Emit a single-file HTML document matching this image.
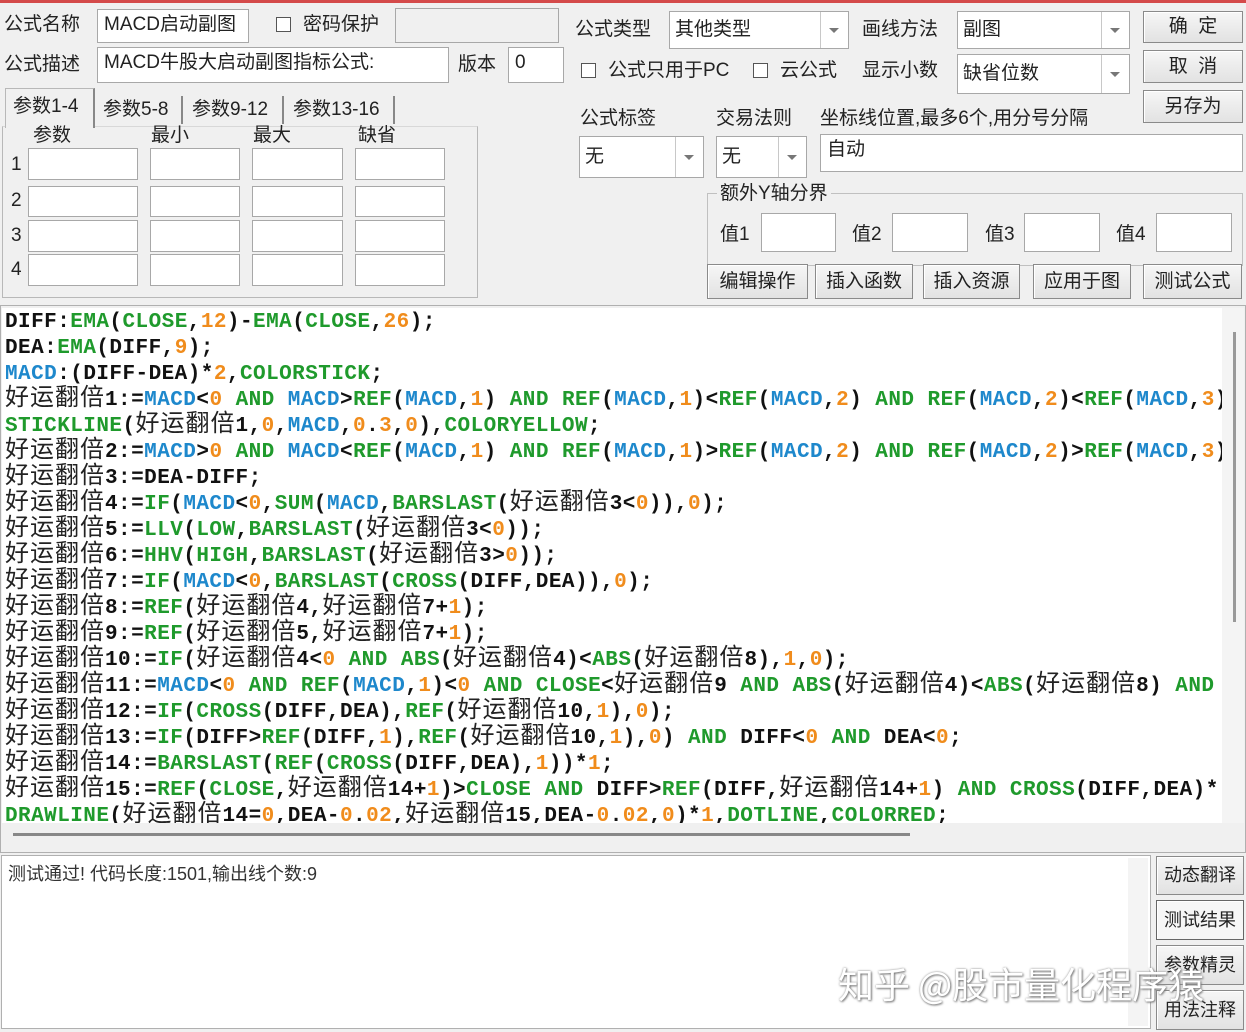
<!DOCTYPE html>
<html><head><meta charset="utf-8">
<style>
*{box-sizing:border-box;margin:0;padding:0}
body{width:1246px;height:1032px;background:#f0f0f0;position:relative;overflow:hidden;font-family:"Liberation Sans","Microsoft YaHei","Noto Sans CJK SC",sans-serif;font-size:19px;color:#222}
.a{position:absolute;white-space:nowrap}
.l{position:absolute;white-space:nowrap;line-height:24px}
.in{position:absolute;background:#fff;border:1px solid #a8a8a8;font-size:19px;line-height:30px;padding-left:6px;white-space:nowrap}
.dis{background:#f0f0f0}
.cb{position:absolute;width:15px;height:15px;background:#fff;border:1px solid #555}
.sel{position:absolute;background:#fff;border:1px solid #a8a8a8;padding-left:5px;font-size:19px;white-space:nowrap}
.sel:after{content:"";position:absolute;right:0;top:0;bottom:0;width:27px;border-left:1px solid #c8c8c8;background:#fff}
.sel i{position:absolute;right:9px;top:50%;margin-top:-2px;width:0;height:0;border-left:5px solid transparent;border-right:5px solid transparent;border-top:5px solid #777;z-index:2}
.btn{position:absolute;background:linear-gradient(#f6f6f6,#e2e2e2);border:1px solid #8a8a8a;box-shadow:inset 1px 1px 0 #fff;text-align:center;font-size:19px;white-space:nowrap}
#code{position:absolute;left:2px;top:308px;width:1220px;height:515px;background:#fff;overflow:hidden;padding-left:3px;padding-top:2px;font-family:"Liberation Mono",monospace;font-weight:bold;font-size:21px;letter-spacing:0.45px;line-height:26px;color:#111;white-space:pre}
#code div{height:26px;line-height:26px;overflow:visible}
#code i{font-style:normal;color:#1f9a2c}
#code u{text-decoration:none;color:#1e88cc}
#code s{text-decoration:none;color:#f08c1c}
#code em{font-style:normal;font-family:"Noto Sans CJK SC",sans-serif;font-weight:normal;font-size:24px;letter-spacing:1px;line-height:0;color:#222}
</style></head><body>
<div class="a" style="left:0;top:0;width:1246px;height:3px;background:#d44a4a"></div>

<div class="l" style="left:4px;top:13px">公式名称</div>
<div class="in" style="left:97px;top:9px;width:152px;height:34px">MACD启动副图</div>
<div class="cb" style="left:276px;top:17px"></div>
<div class="l" style="left:303px;top:13px">密码保护</div>
<div class="in dis" style="left:395px;top:8px;width:164px;height:35px"></div>
<div class="l" style="left:4px;top:53px">公式描述</div>
<div class="in" style="left:97px;top:47px;width:352px;height:36px">MACD牛股大启动副图指标公式:</div>
<div class="l" style="left:458px;top:53px">版本</div>
<div class="in" style="left:508px;top:47px;width:56px;height:36px">0</div>

<div class="a" style="left:2px;top:126px;width:476px;height:172px;border:1px solid #b8b8b8;border-top-color:#d8d8d8"></div>
<div class="a" style="left:5px;top:88px;width:90px;height:40px;background:#f0f0f0;border:1px solid #b8b8b8;border-bottom:none;border-right:2px solid #888"></div>
<div class="l" style="left:13px;top:95px">参数1-4</div>
<div class="l" style="left:103px;top:98px">参数5-8</div>
<div class="a" style="left:181px;top:96px;height:28px;border-left:2px solid #888"></div>
<div class="l" style="left:192px;top:98px">参数9-12</div>
<div class="a" style="left:282px;top:96px;height:28px;border-left:2px solid #888"></div>
<div class="l" style="left:293px;top:98px">参数13-16</div>
<div class="a" style="left:393px;top:96px;height:28px;border-left:2px solid #888"></div>
<div class="l" style="left:33px;top:124px">参数</div>
<div class="l" style="left:151px;top:124px">最小</div>
<div class="l" style="left:253px;top:124px">最大</div>
<div class="l" style="left:358px;top:124px">缺省</div>
<div class="l" style="left:11px;top:153px">1</div>
<div class="l" style="left:11px;top:189px">2</div>
<div class="l" style="left:11px;top:224px">3</div>
<div class="l" style="left:11px;top:258px">4</div>
<div class="in" style="left:28px;top:148px;width:110px;height:32px"></div>
<div class="in" style="left:150px;top:148px;width:90px;height:32px"></div>
<div class="in" style="left:252px;top:148px;width:91px;height:32px"></div>
<div class="in" style="left:355px;top:148px;width:90px;height:32px"></div>
<div class="in" style="left:28px;top:186px;width:110px;height:31px"></div>
<div class="in" style="left:150px;top:186px;width:90px;height:31px"></div>
<div class="in" style="left:252px;top:186px;width:91px;height:31px"></div>
<div class="in" style="left:355px;top:186px;width:90px;height:31px"></div>
<div class="in" style="left:28px;top:220px;width:110px;height:32px"></div>
<div class="in" style="left:150px;top:220px;width:90px;height:32px"></div>
<div class="in" style="left:252px;top:220px;width:91px;height:32px"></div>
<div class="in" style="left:355px;top:220px;width:90px;height:32px"></div>
<div class="in" style="left:28px;top:254px;width:110px;height:32px"></div>
<div class="in" style="left:150px;top:254px;width:90px;height:32px"></div>
<div class="in" style="left:252px;top:254px;width:91px;height:32px"></div>
<div class="in" style="left:355px;top:254px;width:90px;height:32px"></div>

<div class="l" style="left:575px;top:18px">公式类型</div>
<div class="sel" style="left:669px;top:11px;width:180px;height:38px;line-height:36px">其他类型<i></i></div>
<div class="l" style="left:862px;top:18px">画线方法</div>
<div class="sel" style="left:957px;top:11px;width:173px;height:38px;line-height:36px">副图<i></i></div>
<div class="btn" style="left:1143px;top:11px;width:100px;height:32px;line-height:30px">确&nbsp;&nbsp;定</div>
<div class="btn" style="left:1143px;top:50px;width:100px;height:33px;line-height:31px">取&nbsp;&nbsp;消</div>
<div class="btn" style="left:1143px;top:90px;width:100px;height:33px;line-height:31px">另存为</div>
<div class="cb" style="left:581px;top:63px"></div>
<div class="l" style="left:608px;top:59px">公式只用于PC</div>
<div class="cb" style="left:753px;top:63px"></div>
<div class="l" style="left:780px;top:59px">云公式</div>
<div class="l" style="left:862px;top:59px">显示小数</div>
<div class="sel" style="left:957px;top:54px;width:173px;height:40px;line-height:38px">缺省位数<i></i></div>

<div class="l" style="left:580px;top:107px">公式标签</div>
<div class="l" style="left:716px;top:107px">交易法则</div>
<div class="l" style="left:820px;top:107px">坐标线位置,最多6个,用分号分隔</div>
<div class="sel" style="left:579px;top:136px;width:125px;height:42px;line-height:40px">无<i></i></div>
<div class="sel" style="left:716px;top:136px;width:91px;height:42px;line-height:40px">无<i></i></div>
<div class="in" style="left:820px;top:134px;width:423px;height:38px">自动</div>

<div class="a" style="left:707px;top:193px;width:536px;height:73px;border:1px solid #c0c0c0"></div>
<div class="l" style="left:717px;top:182px;background:#f0f0f0;padding:0 3px">额外Y轴分界</div>
<div class="l" style="left:720px;top:223px">值1</div>
<div class="in" style="left:761px;top:213px;width:75px;height:39px"></div>
<div class="l" style="left:852px;top:223px">值2</div>
<div class="in" style="left:892px;top:213px;width:76px;height:39px"></div>
<div class="l" style="left:985px;top:223px">值3</div>
<div class="in" style="left:1024px;top:213px;width:76px;height:39px"></div>
<div class="l" style="left:1116px;top:223px">值4</div>
<div class="in" style="left:1156px;top:213px;width:76px;height:39px"></div>

<div class="btn" style="left:707px;top:264px;width:101px;height:35px;line-height:33px">编辑操作</div>
<div class="btn" style="left:815px;top:264px;width:98px;height:35px;line-height:33px">插入函数</div>
<div class="btn" style="left:923px;top:264px;width:97px;height:35px;line-height:33px">插入资源</div>
<div class="btn" style="left:1033px;top:264px;width:98px;height:35px;line-height:33px">应用于图</div>
<div class="btn" style="left:1143px;top:264px;width:99px;height:35px;line-height:33px">测试公式</div>

<div class="a" style="left:0;top:305px;width:1246px;height:548px;border:1px solid #b0b0b0;background:#f0f0f0"></div>
<div class="a" style="left:1222px;top:308px;width:22px;height:515px;background:#f4f4f4"></div>
<div class="a" style="left:1233px;top:332px;width:3px;height:290px;background:#999"></div>
<div class="a" style="left:13px;top:833px;width:897px;height:3px;background:#888"></div>
<div id="code"><div>DIFF:<i>EMA</i>(<i>CLOSE</i>,<s>12</s>)-<i>EMA</i>(<i>CLOSE</i>,<s>26</s>);</div><div>DEA:<i>EMA</i>(DIFF,<s>9</s>);</div><div><u>MACD</u>:(DIFF-DEA)*<s>2</s>,<i>COLORSTICK</i>;</div><div><em>好运翻倍</em>1:=<u>MACD</u>&lt;<s>0</s> <i>AND</i> <u>MACD</u>&gt;<i>REF</i>(<u>MACD</u>,<s>1</s>) <i>AND</i> <i>REF</i>(<u>MACD</u>,<s>1</s>)&lt;<i>REF</i>(<u>MACD</u>,<s>2</s>) <i>AND</i> <i>REF</i>(<u>MACD</u>,<s>2</s>)&lt;<i>REF</i>(<u>MACD</u>,<s>3</s>)</div><div><i>STICKLINE</i>(<em>好运翻倍</em>1,<s>0</s>,<u>MACD</u>,<s>0</s>.<s>3</s>,<s>0</s>),<i>COLORYELLOW</i>;</div><div><em>好运翻倍</em>2:=<u>MACD</u>&gt;<s>0</s> <i>AND</i> <u>MACD</u>&lt;<i>REF</i>(<u>MACD</u>,<s>1</s>) <i>AND</i> <i>REF</i>(<u>MACD</u>,<s>1</s>)&gt;<i>REF</i>(<u>MACD</u>,<s>2</s>) <i>AND</i> <i>REF</i>(<u>MACD</u>,<s>2</s>)&gt;<i>REF</i>(<u>MACD</u>,<s>3</s>)</div><div><em>好运翻倍</em>3:=DEA-DIFF;</div><div><em>好运翻倍</em>4:=<i>IF</i>(<u>MACD</u>&lt;<s>0</s>,<i>SUM</i>(<u>MACD</u>,<i>BARSLAST</i>(<em>好运翻倍</em>3&lt;<s>0</s>)),<s>0</s>);</div><div><em>好运翻倍</em>5:=<i>LLV</i>(<i>LOW</i>,<i>BARSLAST</i>(<em>好运翻倍</em>3&lt;<s>0</s>));</div><div><em>好运翻倍</em>6:=<i>HHV</i>(<i>HIGH</i>,<i>BARSLAST</i>(<em>好运翻倍</em>3&gt;<s>0</s>));</div><div><em>好运翻倍</em>7:=<i>IF</i>(<u>MACD</u>&lt;<s>0</s>,<i>BARSLAST</i>(<i>CROSS</i>(DIFF,DEA)),<s>0</s>);</div><div><em>好运翻倍</em>8:=<i>REF</i>(<em>好运翻倍</em>4,<em>好运翻倍</em>7+<s>1</s>);</div><div><em>好运翻倍</em>9:=<i>REF</i>(<em>好运翻倍</em>5,<em>好运翻倍</em>7+<s>1</s>);</div><div><em>好运翻倍</em>10:=<i>IF</i>(<em>好运翻倍</em>4&lt;<s>0</s> <i>AND</i> <i>ABS</i>(<em>好运翻倍</em>4)&lt;<i>ABS</i>(<em>好运翻倍</em>8),<s>1</s>,<s>0</s>);</div><div><em>好运翻倍</em>11:=<u>MACD</u>&lt;<s>0</s> <i>AND</i> <i>REF</i>(<u>MACD</u>,<s>1</s>)&lt;<s>0</s> <i>AND</i> <i>CLOSE</i>&lt;<em>好运翻倍</em>9 <i>AND</i> <i>ABS</i>(<em>好运翻倍</em>4)&lt;<i>ABS</i>(<em>好运翻倍</em>8) <i>AND</i></div><div><em>好运翻倍</em>12:=<i>IF</i>(<i>CROSS</i>(DIFF,DEA),<i>REF</i>(<em>好运翻倍</em>10,<s>1</s>),<s>0</s>);</div><div><em>好运翻倍</em>13:=<i>IF</i>(DIFF&gt;<i>REF</i>(DIFF,<s>1</s>),<i>REF</i>(<em>好运翻倍</em>10,<s>1</s>),<s>0</s>) <i>AND</i> DIFF&lt;<s>0</s> <i>AND</i> DEA&lt;<s>0</s>;</div><div><em>好运翻倍</em>14:=<i>BARSLAST</i>(<i>REF</i>(<i>CROSS</i>(DIFF,DEA),<s>1</s>))*<s>1</s>;</div><div><em>好运翻倍</em>15:=<i>REF</i>(<i>CLOSE</i>,<em>好运翻倍</em>14+<s>1</s>)&gt;<i>CLOSE</i> <i>AND</i> DIFF&gt;<i>REF</i>(DIFF,<em>好运翻倍</em>14+<s>1</s>) <i>AND</i> <i>CROSS</i>(DIFF,DEA)*</div><div><i>DRAWLINE</i>(<em>好运翻倍</em>14=<s>0</s>,DEA-<s>0</s>.<s>02</s>,<em>好运翻倍</em>15,DEA-<s>0</s>.<s>02</s>,<s>0</s>)*<s>1</s>,<i>DOTLINE</i>,<i>COLORRED</i>;</div></div>

<div class="a" style="left:1px;top:855px;width:1150px;height:174px;background:#fff;border:1px solid #b0b0b0"></div>
<div class="a" style="left:1128px;top:858px;width:20px;height:168px;background:#f4f4f4"></div>
<div class="l" style="left:8px;top:862px;font-size:18px;color:#333">测试通过! 代码长度:1501,输出线个数:9</div>
<div class="btn" style="left:1156px;top:856px;width:88px;height:39px;line-height:37px;font-size:18px">动态翻译</div>
<div class="btn" style="left:1156px;top:900px;width:88px;height:40px;line-height:38px;font-size:18px;background:#f6f6f6;border-color:#666">测试结果</div>
<div class="btn" style="left:1156px;top:945px;width:88px;height:40px;line-height:38px;font-size:18px">参数精灵</div>
<div class="btn" style="left:1156px;top:990px;width:88px;height:40px;line-height:38px;font-size:18px">用法注释</div>
<div class="a" style="left:838px;top:960px;font-size:36px;line-height:46px;color:#fff;text-shadow:1px 1px 2px #777,0 0 2px #999;font-family:'Noto Sans CJK SC',sans-serif">知乎 @股市量化程序猿</div>
</body></html>
